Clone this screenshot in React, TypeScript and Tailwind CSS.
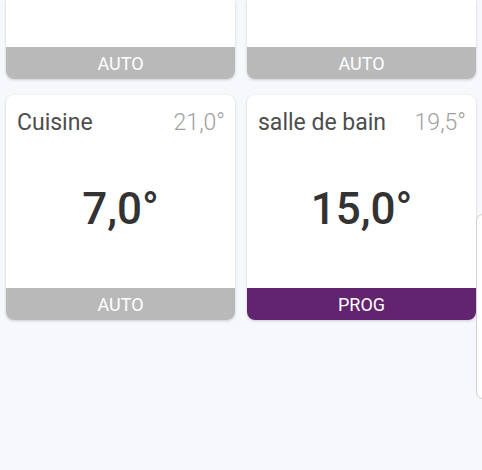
const cards = [
  { name: 'Salon', current: '20,0°', target: '19,0°', mode: 'AUTO', cropped: true },
  { name: 'Chambre', current: '18,5°', target: '17,0°', mode: 'AUTO', cropped: true },
  { name: 'Cuisine', current: '21,0°', target: '7,0°', mode: 'AUTO', cropped: false },
  { name: 'salle de bain', current: '19,5°', target: '15,0°', mode: 'PROG', cropped: false },
];

type Card = (typeof cards)[number];

function ZoneCard({ card }: { card: Card }) {
  const prog = card.mode === 'PROG';
  return (
    <div
      className={`flex flex-col overflow-hidden bg-white shadow-[0_1px_3px_rgba(0,0,0,0.18)] ${
        card.cropped ? 'rounded-b-[8px]' : 'rounded-[8px]'
      }`}
    >
      {card.cropped ? (
        // scrolled past: only the lower part of the card is visible
        <div className="h-[47px]" />
      ) : (
        <div className="h-[193px] flex flex-col">
          <div className="flex items-start justify-between pl-[11px] pr-[10px] pt-[14px] leading-[28px] text-[23px]">
            <span className="text-[#4d4d4d]">{card.name}</span>
            <span className="text-[#a0a0a0] font-light">{card.current}</span>
          </div>
          <div className="flex-1 flex items-center justify-center pb-[7px]">
            <span className="text-[44px] font-medium text-[#333333]">{card.target}</span>
          </div>
        </div>
      )}
      <div
        className={`h-[32px] flex items-center justify-center text-[18px] text-white ${
          prog ? 'bg-[#62246e]' : 'bg-[#b9b9b9]'
        }`}
      >
        {card.mode}
      </div>
    </div>
  );
}

export default function App() {
  return (
    <div
      className="relative w-[482px] h-[470px] overflow-hidden bg-[#f6f8fb]"
      style={{ fontFamily: 'Roboto, "Noto Sans", sans-serif' }}
    >
      <div className="grid grid-cols-2 gap-x-[12px] gap-y-[16px] px-[6px]">
        {cards.map((c) => (
          <ZoneCard key={c.name} card={c} />
        ))}
      </div>

      {/* Side panel peeking in from the right */}
      <div className="absolute left-[476px] top-[214px] w-[40px] h-[185px] bg-white border border-[#cfcfcf] rounded-l-[7px]" />
    </div>
  );
}
